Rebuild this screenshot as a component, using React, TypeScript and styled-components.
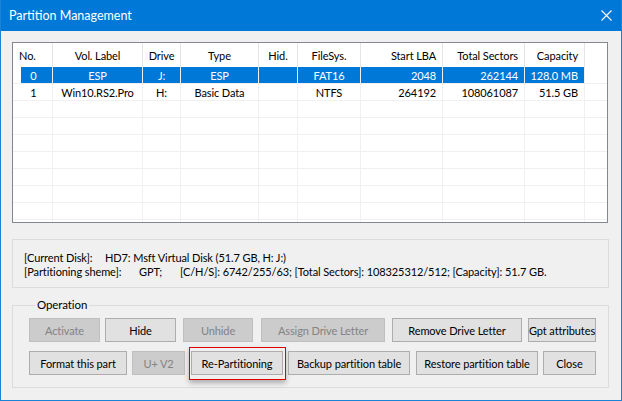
import React, { FC } from "react";
import styled, { createGlobalStyle, css } from "styled-components";

const GlobalStyle = createGlobalStyle`
  html, body {
    margin: 0;
    padding: 0;
    background: #ffffff;
  }
  body {
    font-family: "Segoe UI", Lato, "Noto Sans", Arial, sans-serif;
    font-size: 11px;
    letter-spacing: -0.1px;
    color: #000;
  }
  * {
    box-sizing: border-box;
  }
`;

interface Column {
  title: string;
  width: number;
  align: "left" | "center" | "right";
  headAlign?: "left" | "center" | "right";
}

const columns: Column[] = [
  { title: "No.", width: 40, align: "center", headAlign: "left" },
  { title: "Vol. Label", width: 90, align: "center" },
  { title: "Drive", width: 38, align: "center" },
  { title: "Type", width: 78, align: "center" },
  { title: "Hid.", width: 39, align: "center" },
  { title: "FileSys.", width: 63, align: "center" },
  { title: "Start LBA", width: 82, align: "right" },
  { title: "Total Sectors", width: 82, align: "right" },
  { title: "Capacity", width: 60, align: "right" },
];

const partitions: string[][] = [
  ["0", "ESP", "J:", "ESP", "", "FAT16", "2048", "262144", "128.0 MB"],
  ["1", "Win10.RS2.Pro", "H:", "Basic Data", "", "NTFS", "264192", "108061087", "51.5 GB"],
];

const EMPTY_ROWS = 8;

interface ButtonSpec {
  label: string;
  width: number;
  gap: number;
  disabled?: boolean;
  focused?: boolean;
}

const firstRow: ButtonSpec[] = [
  { label: "Activate", width: 71, gap: 0, disabled: true },
  { label: "Hide", width: 71, gap: 5 },
  { label: "Unhide", width: 70, gap: 7, disabled: true },
  { label: "Assign Drive Letter", width: 124, gap: 8, disabled: true },
  { label: "Remove Drive Letter", width: 130, gap: 7 },
  { label: "Gpt attributes", width: 68, gap: 6 },
];

const secondRow: ButtonSpec[] = [
  { label: "Format this part", width: 98, gap: 0 },
  { label: "U+ V2", width: 53, gap: 5, disabled: true },
  { label: "Re-Partitioning", width: 92, gap: 6, focused: true },
  { label: "Backup partition table", width: 122, gap: 5 },
  { label: "Restore partition table", width: 122, gap: 6 },
  { label: "Close", width: 53, gap: 5 },
];

const CloseIcon: FC = () => (
  <svg width="11" height="11" viewBox="0 0 11 11">
    <path d="M0.5 0.5 L10.5 10.5 M10.5 0.5 L0.5 10.5" stroke="#ffffff" strokeWidth="1.1" fill="none" />
  </svg>
);

const App: FC = () => {
  return (
    <>
      <GlobalStyle />
      <Window>
        <TitleBar>
          <Title>Partition Management</Title>
          <CloseButton>
            <CloseIcon />
          </CloseButton>
        </TitleBar>
        <Body>
          <ListBox>
            <HeaderRow>
              {columns.map((col) => (
                <HeaderCell key={col.title} $width={col.width} $align={col.headAlign ?? col.align}>
                  {col.title}
                </HeaderCell>
              ))}
              <FillerHead />
            </HeaderRow>
            {partitions.map((row, i) => (
              <Row key={i}>
                {row.map((value, c) => (
                  <Cell
                    key={c}
                    $width={columns[c].width}
                    $align={columns[c].align}
                    $selected={i === 0}
                    $indent={c === 0}
                  >
                    {value}
                  </Cell>
                ))}
                <Filler />
              </Row>
            ))}
            {Array.from({ length: EMPTY_ROWS }).map((_, i) => (
              <Row key={`e${i}`}>
                {columns.map((col, c) => (
                  <Cell key={c} $width={col.width} $align={col.align} />
                ))}
                <Filler />
              </Row>
            ))}
          </ListBox>

          <InfoBox>
            <InfoLine>
              <InfoLabel $width={81}>[Current Disk]:</InfoLabel>
              <span>HD7: Msft Virtual Disk (51.7 GB, H: J:)</span>
            </InfoLine>
            <InfoLine>
              <InfoLabel $width={115}>[Partitioning sheme]:</InfoLabel>
              <InfoLabel $width={41}>GPT;</InfoLabel>
              <span>
                [C/H/S]: 6742/255/63; [Total Sectors]: 108325312/512; [Capacity]: 51.7 GB.
              </span>
            </InfoLine>
          </InfoBox>

          <GroupBox>
            <Legend>Operation</Legend>
            <ButtonRow>
              {firstRow.map((b) => (
                <DialogButton key={b.label} $width={b.width} $gap={b.gap} disabled={b.disabled} $focused={b.focused}>
                  {b.label}
                </DialogButton>
              ))}
            </ButtonRow>
            <ButtonRow>
              {secondRow.map((b) => (
                <DialogButton key={b.label} $width={b.width} $gap={b.gap} disabled={b.disabled} $focused={b.focused}>
                  {b.label}
                </DialogButton>
              ))}
            </ButtonRow>
          </GroupBox>
        </Body>
      </Window>
    </>
  );
};

export default App;

const Window = styled.div`
  width: 622px;
  height: 401px;
  display: flex;
  flex-direction: column;
  background: #f0f0f0;
  border: 1px solid #1883d7;
  border-top: none;
  overflow: hidden;
`;

const TitleBar = styled.div`
  height: 31px;
  flex: none;
  margin: 0 -1px;
  background: #0078d7;
  display: flex;
  align-items: center;
  justify-content: space-between;
  padding: 0 10px 1px 9px;
`;

const Title = styled.span`
  color: #ffffff;
  font-size: 12.5px;
  letter-spacing: 0;
`;

const CloseButton = styled.div`
  width: 11px;
  height: 11px;
  display: flex;
  margin-top: 1px;
`;

const Body = styled.div`
  flex: 1;
  display: flex;
  flex-direction: column;
  padding: 11px 0 0 11px;
`;

const ListBox = styled.div`
  width: 596px;
  height: 181px;
  flex: none;
  background: #ffffff;
  border: 1px solid #828790;
  overflow: hidden;
`;

const HeaderRow = styled.div`
  display: flex;
  height: 24px;
`;

type Align = "left" | "center" | "right";

interface CellProps {
  $width: number;
  $align: Align;
}

const alignCss = css<CellProps>`
  justify-content: ${(p) =>
    p.$align === "left" ? "flex-start" : p.$align === "right" ? "flex-end" : "center"};
`;

const HeaderCell = styled.div<CellProps>`
  width: ${(p) => p.$width}px;
  flex: none;
  display: flex;
  align-items: center;
  ${alignCss};
  padding: 0 6px;
  border-right: 1px solid #e5e5e5;
  white-space: nowrap;
  overflow: hidden;
`;

const FillerHead = styled.div`
  flex: 1;
`;

const Row = styled.div`
  display: flex;
  height: 17px;
  flex: none;
  border-bottom: 1px solid #f0f0f0;
`;

interface BodyCellProps extends CellProps {
  $selected?: boolean;
  $indent?: boolean;
}

const Cell = styled.div<BodyCellProps>`
  width: ${(p) => p.$width}px;
  flex: none;
  display: flex;
  align-items: center;
  ${alignCss};
  padding: 0 6px 0 ${(p) => (p.$indent ? 8 : 6)}px;
  border-right: 1px solid #f0f0f0;
  white-space: nowrap;
  overflow: hidden;
  color: ${(p) => (p.$selected ? "#ffffff" : "#000000")};
  background: ${(p) =>
    p.$selected
      ? p.$indent
        ? "linear-gradient(to right, transparent 8px, #0078d7 8px)"
        : "#0078d7"
      : "transparent"};
`;

const Filler = styled.div`
  flex: 1;
`;

const InfoBox = styled.div`
  width: 597px;
  height: 49px;
  margin-top: 16px;
  flex: none;
  border: 1px solid #dcdcdc;
  display: flex;
  flex-direction: column;
  justify-content: center;
  padding: 1px 0 0 11px;
`;

const InfoLine = styled.div`
  display: flex;
  height: 14px;
  align-items: center;
  white-space: nowrap;
`;

const InfoLabel = styled.span<{ $width: number }>`
  width: ${(p) => p.$width}px;
  flex: none;
`;

const GroupBox = styled.fieldset`
  width: 597px;
  height: 91px;
  margin: 9px 0 0 0;
  padding: 5px 0 0 16px;
  border: 1px solid #dcdcdc;
  min-width: 0;
  display: flex;
  flex-direction: column;
  gap: 9px;
`;

const Legend = styled.legend`
  padding: 0 2px;
  margin-left: 6px;
  font-size: 11.5px;
  line-height: 16px;
`;

const ButtonRow = styled.div`
  display: flex;
  height: 24px;
`;

interface ButtonProps {
  $width: number;
  $gap: number;
  $focused?: boolean;
}

const DialogButton = styled.button<ButtonProps>`
  position: relative;
  width: ${(p) => p.$width}px;
  height: 24px;
  margin: 0 0 0 ${(p) => p.$gap}px;
  padding: 0;
  flex: none;
  font-family: inherit;
  font-size: 11px;
  letter-spacing: -0.1px;
  color: #000000;
  background: #e1e1e1;
  border: 1px solid #adadad;
  white-space: nowrap;
  overflow: visible;
  display: flex;
  align-items: center;
  justify-content: center;

  &:disabled {
    color: #838383;
    background: #cccccc;
    border-color: #bfbfbf;
  }

  ${(p) =>
    p.$focused &&
    css`
      &::after {
        content: "";
        position: absolute;
        top: -5px;
        left: -3px;
        right: -4px;
        bottom: -6px;
        border: 1px solid #e00000;
        box-shadow: 0 3px 5px rgba(0, 0, 0, 0.28);
        pointer-events: none;
      }
    `}
`;
